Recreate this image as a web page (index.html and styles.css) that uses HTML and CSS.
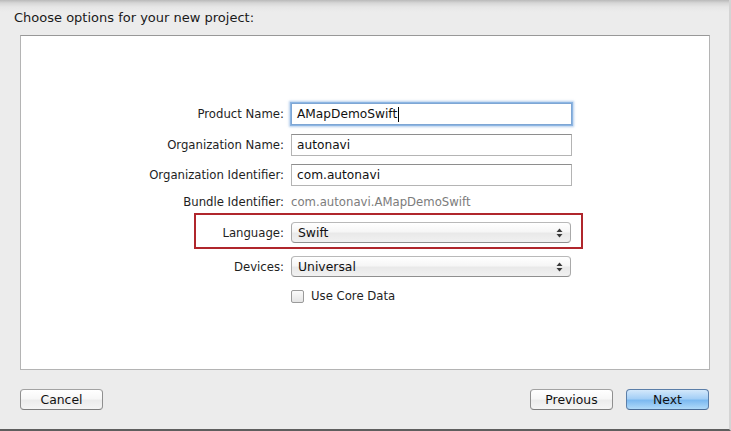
FILE: index.html
```html
<!DOCTYPE html>
<html>
<head>
<meta charset="utf-8">
<link rel="stylesheet" href="styles.css">
</head>
<body>
<div class="window">
  <div class="title">Choose options for your new project:</div>
  <div class="panel">
    <div class="form">
      <div class="row r1">
        <label class="lbl">Product Name:</label>
        <div class="field focus">AMapDemoSwift<span class="caret"></span></div>
      </div>
      <div class="row r2">
        <label class="lbl">Organization Name:</label>
        <div class="field">autonavi</div>
      </div>
      <div class="row r3">
        <label class="lbl">Organization Identifier:</label>
        <div class="field">com.autonavi</div>
      </div>
      <div class="row r4">
        <label class="lbl">Bundle Identifier:</label>
        <div class="value">com.autonavi.AMapDemoSwift</div>
      </div>
      <div class="highlight">
        <div class="row r5">
          <label class="lbl lbl-short">Language:</label>
          <div class="popup">Swift
            <svg class="arrows" width="7" height="10" viewBox="0 0 7 10"><path d="M3.5 0.5 L6.5 4 L0.5 4 Z" fill="#3a3a3a"/><path d="M3.5 9.5 L6.5 6 L0.5 6 Z" fill="#3a3a3a"/></svg>
          </div>
        </div>
      </div>
      <div class="row r6">
        <label class="lbl">Devices:</label>
        <div class="popup">Universal
          <svg class="arrows" width="7" height="10" viewBox="0 0 7 10"><path d="M3.5 0.5 L6.5 4 L0.5 4 Z" fill="#3a3a3a"/><path d="M3.5 9.5 L6.5 6 L0.5 6 Z" fill="#3a3a3a"/></svg>
        </div>
      </div>
      <div class="row r7">
        <span class="lbl"></span>
        <span class="check"></span>
        <span class="check-text">Use Core Data</span>
      </div>
    </div>
  </div>
  <div class="footer">
    <button class="btn">Cancel</button>
    <div class="spacer"></div>
    <button class="btn">Previous</button>
    <button class="btn primary">Next</button>
  </div>
</div>
</body>
</html>
```

FILE: styles.css
```css
html, body {
  margin: 0;
  padding: 0;
}
body {
  width: 731px;
  height: 431px;
  overflow: hidden;
  background: #ececec;
  font-family: "DejaVu Sans", "Liberation Sans", sans-serif;
  color: #1c1c1c;
}
.window {
  box-sizing: border-box;
  width: 731px;
  height: 431px;
  background: linear-gradient(to bottom, #b9b9b9 0px, #d6d6d6 3px, #e6e6e6 7px, #ececec 12px, #ececec 100%);
  border-bottom: 2px solid #5e5e5e;
  border-right: 2px solid #d4d4d4;
  display: flex;
  flex-direction: column;
}
.title {
  font-size: 13px;
  line-height: 16px;
  padding: 10px 0 0 14px;
  height: 25px;
  color: #1a1a1a;
}
.panel {
  box-sizing: border-box;
  margin-left: 20px;
  width: 690px;
  height: 335px;
  background: #ffffff;
  border: 1px solid #b4b4b4;
  border-top-color: #989898;
  padding-top: 67px;
}
.form {
  width: 468px;
  margin-left: 83px;
  display: flex;
  flex-direction: column;
}
.row {
  display: flex;
  align-items: center;
}
.lbl {
  width: 180px;
  flex: none;
  text-align: right;
  font-size: 11.7px;
  margin-right: 7px;
  color: #1e1e1e;
}
.field {
  box-sizing: border-box;
  width: 281px;
  height: 22px;
  border: 1px solid #b4b4b4;
  border-top-color: #8e8e8e;
  background: #fff;
  font-size: 12.2px;
  line-height: 20px;
  padding-left: 5px;
  color: #111;
  display: flex;
  align-items: center;
}
.field.focus {
  border-color: #7ea6d4;
  box-shadow: 0 0 0 1px #8db6e3, 0 0 2px 2px rgba(120, 165, 220, 0.55);
}
.caret {
  display: inline-block;
  width: 1px;
  height: 15px;
  background: #000;
  margin-left: 1px;
}
.r1 { margin-bottom: 9px; }
.r2 { margin-bottom: 8px; }
.r4 { margin-top: 8px; height: 16px; }
.value {
  font-size: 11.7px;
  color: #7c7c7c;
}
.highlight {
  margin-top: 3px;
  margin-left: 90px;
  width: 389px;
  box-sizing: border-box;
  border: 2px solid #b0262c;
  padding: 7px 0 4px 0;
}
.lbl-short {
  width: 88px;
}
.popup {
  position: relative;
  box-sizing: border-box;
  width: 280px;
  height: 21px;
  border: 1px solid #a9a9a9;
  border-top-color: #b9b9b9;
  border-bottom-color: #8f8f8f;
  border-radius: 4px;
  background: linear-gradient(to bottom, #ffffff 0%, #f6f6f6 45%, #e9e9e9 55%, #f1f1f1 100%);
  font-size: 12.4px;
  line-height: 19px;
  padding-left: 6px;
  color: #111;
}
.arrows {
  position: absolute;
  right: 7px;
  top: 5px;
}
.r6 { margin-top: 7px; }
.r7 {
  margin-top: 12px;
  height: 14px;
}
.check {
  box-sizing: border-box;
  width: 13px;
  height: 13px;
  border: 1px solid #9a9a9a;
  border-radius: 2px;
  background: linear-gradient(to bottom, #fafafa, #e4e4e4);
  margin-right: 7px;
  flex: none;
}
.check-text {
  font-size: 11.7px;
  color: #1e1e1e;
}
.footer {
  display: flex;
  align-items: center;
  padding: 19px 20px 0 20px;
  gap: 13px;
}
.spacer { flex: 1; }
.btn {
  box-sizing: border-box;
  width: 83px;
  height: 21px;
  border: 1px solid #8f8f8f;
  border-top-color: #a2a2a2;
  border-bottom-color: #7e7e7e;
  border-radius: 4px;
  background: linear-gradient(to bottom, #ffffff 0%, #f7f7f7 45%, #ececec 55%, #f5f5f5 100%);
  font-family: "DejaVu Sans", "Liberation Sans", sans-serif;
  font-size: 12.4px;
  color: #111;
  padding: 0;
  line-height: 19px;
}
.btn.primary {
  border-color: #5b7ea8;
  border-bottom-color: #4a6c96;
  background: linear-gradient(to bottom, #d3e8fb 0%, #a4cff6 45%, #7cb9f0 55%, #b0daf9 100%);
}
```
